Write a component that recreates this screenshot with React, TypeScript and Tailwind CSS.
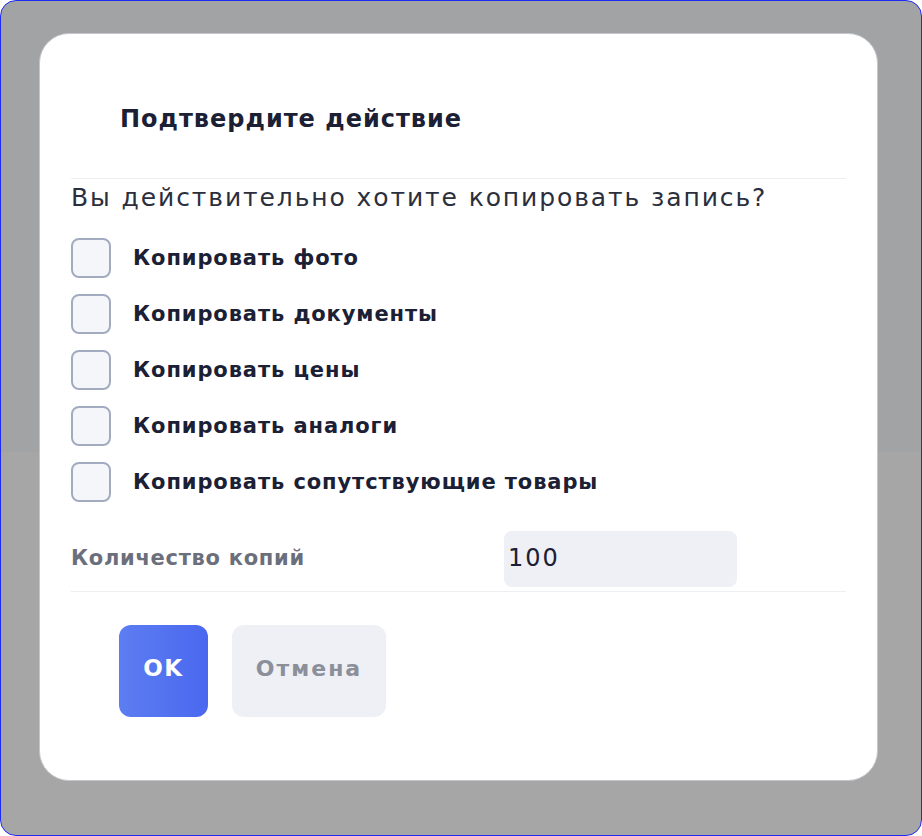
import React from "react";

const items = [
  "Копировать фото",
  "Копировать документы",
  "Копировать цены",
  "Копировать аналоги",
  "Копировать сопутствующие товары",
];

export default function App() {
  return (
    <div
      className="w-[922px] h-[836px] bg-[linear-gradient(#a2a3a5_0px,#a2a3a5_451px,#a6a6a6_451px)] border-[1.5px] border-[#1d2bf0] rounded-[16px] overflow-hidden pt-[32px] pl-[38px]"
      style={{ fontFamily: "'DejaVu Sans', sans-serif" }}
    >
      <div className="w-[839px] h-[748px] bg-white rounded-[30px] border border-[#c4c6cc] flex flex-col px-[31px]">
        <div className="h-[145px] flex items-center pl-[49px] pt-[25px] border-b border-[#eceef2]">
          <h2 className="text-[24px] font-bold text-[#1b2035] tracking-[1px]">Подтвердите действие</h2>
        </div>
        <div className="pt-[1px] text-[25px] text-[#2b2f3d] leading-[36px] tracking-[1.9px]">
          Вы действительно хотите копировать запись?
        </div>
        <div className="flex flex-col gap-[16px] mt-[22px]">
          {items.map((t) => (
            <div key={t} className="flex items-center gap-[22px] h-[40px]">
              <div className="w-[40px] h-[40px] rounded-[8px] border-2 border-[#a3abc0] bg-[#f5f6f9] shrink-0" />
              <span className="text-[21px] font-bold text-[#1b2035] tracking-[0.9px] pt-[2px]">{t}</span>
            </div>
          ))}
        </div>
        <div className="flex items-center h-[56px] mt-[29px] mb-[4px]">
          <span className="w-[433px] text-[21px] font-semibold text-[#6b6f7c] tracking-[0.7px]">Количество копий</span>
          <div className="w-[233px] h-[56px] rounded-[8px] bg-[#eef0f5] flex items-center pl-[4px] pb-[2px] text-[24px] text-[#1b2035] tracking-[2px]">
            100
          </div>
        </div>
        <div className="border-t border-[#eceef2] flex gap-[24px] pl-[48px] pt-[33px]">
          <button className="w-[89px] h-[92px] rounded-[12px] bg-gradient-to-r from-[#5d7df2] to-[#4a68ef] text-white text-[23px] font-bold tracking-[1.5px] pb-[5px]">
            OK
          </button>
          <button className="w-[154px] h-[92px] rounded-[12px] bg-[#eef0f5] text-[#8b8f9a] text-[22px] font-bold tracking-[2px] pb-[5px]">
            Отмена
          </button>
        </div>
      </div>
    </div>
  );
}
